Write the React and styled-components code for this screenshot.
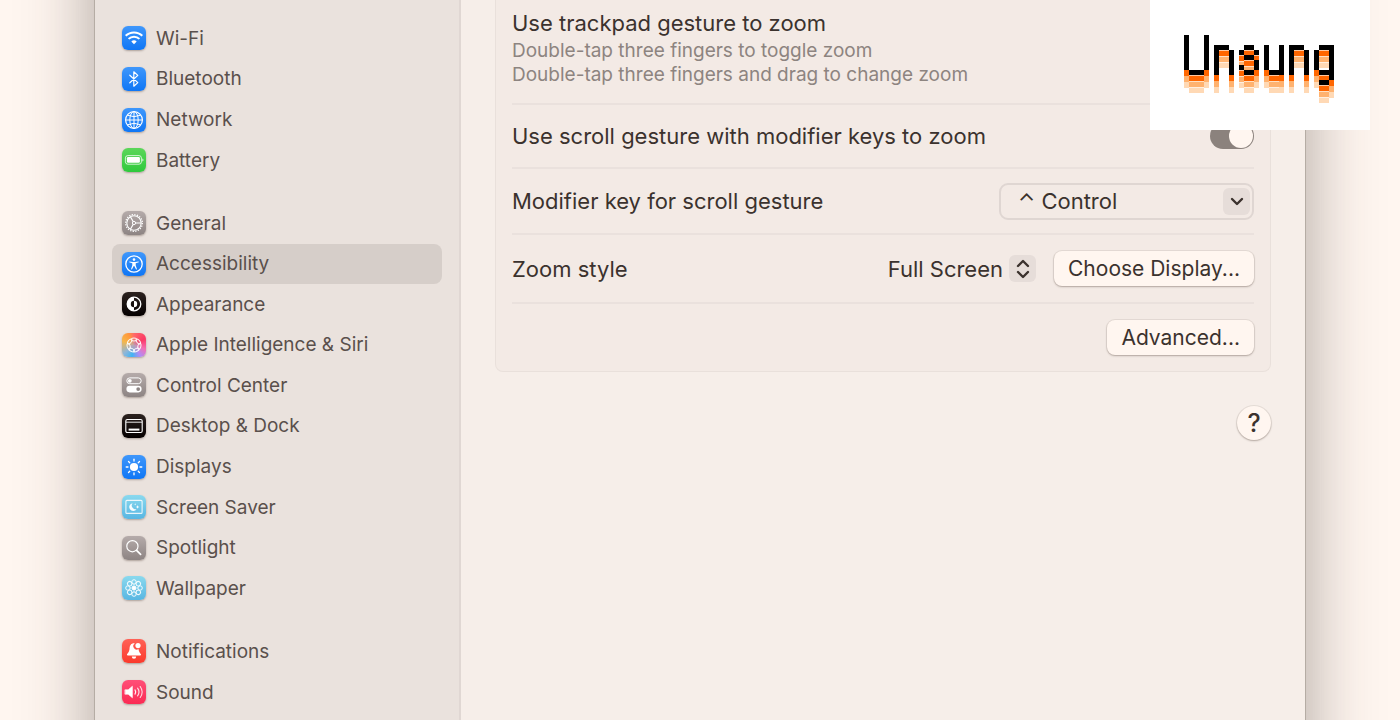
import React, { useState } from 'react'
import styled, { createGlobalStyle } from 'styled-components'

const GlobalStyle = createGlobalStyle`
  * {
    box-sizing: border-box;
  }
  body {
    margin: 0;
    background: #fff6f0;
    font-family: Inter, 'Liberation Sans', sans-serif;
    color: #3b322e;
  }
`

const blue = ['#3f97fb', '#0f76f5']
const gray = ['#b5abaa', '#8d8483']
const black = ['#2c221f', '#050000']
const sky = ['#8ad9ee', '#58b6e2']

const range = n => Array.from({ length: n }, (v, i) => i)

const glyphs = {
  wifi: (
    <g fill="none" stroke="#fff" strokeWidth="2">
      <path d="M3.7 9.8a11.8 11.8 0 0 1 16.6 0" />
      <path d="M6.6 12.9a7.6 7.6 0 0 1 10.8 0" />
      <path d="M12 18.2l-2.7-2.7a3.9 3.9 0 0 1 5.4 0z" fill="#fff" stroke="none" />
    </g>
  ),
  bluetooth: (
    <path
      d="M7.8 8.2l8 7.4-4 3.6V4.8l4 3.6-8 7.4"
      fill="none"
      stroke="#fff"
      strokeWidth="1.2"
      strokeLinejoin="round"
      strokeLinecap="round"
    />
  ),
  network: (
    <g fill="none" stroke="#fff" strokeWidth="1">
      <circle cx="12" cy="12" r="8.4" strokeWidth="1.2" />
      <ellipse cx="12" cy="12" rx="4.2" ry="8.4" />
      <path d="M12 3.6v16.8M3.6 12h16.8M5.4 7.2q6.6 3 13.2 0M5.4 16.8q6.6-3 13.2 0" />
    </g>
  ),
  battery: (
    <g>
      <rect x="3.4" y="7.6" width="16" height="8.6" rx="2.4" fill="none" stroke="#fff" strokeOpacity=".75" />
      <rect x="4.9" y="9.1" width="13" height="5.6" rx="1.2" fill="#fff" />
      <path d="M20.3 10.4q1.2.4 1.2 1.5t-1.2 1.5z" fill="#fff" opacity=".8" />
    </g>
  ),
  general: (
    <g fill="none" stroke="#fff">
      <circle cx="12" cy="12" r="7.2" strokeWidth="1.1" />
      <circle cx="12" cy="12" r="8.4" strokeWidth="1.2" strokeDasharray="1.3 1.34" />
      <circle cx="12" cy="12" r="1.6" strokeWidth="1" />
      <path d="M13.6 12h5.6M11.2 10.6L8.4 5.8M11.2 13.4l-2.8 4.8" strokeWidth="1.1" />
    </g>
  ),
  accessibility: (
    <g fill="#fff">
      <circle cx="12" cy="12" r="8.2" fill="none" stroke="#fff" strokeWidth="1.3" />
      <circle cx="12" cy="7.6" r="1.3" />
      <path d="M7.4 9.4l3.2.6h2.8l3.2-.6.2.9-3.1.9v2l1.3 4.1-.9.3-1.8-3.6h-.6l-1.8 3.6-.9-.3 1.3-4.1v-2l-3.1-.9z" />
    </g>
  ),
  appearance: (
    <g>
      <circle cx="12" cy="12" r="6.8" fill="none" stroke="#fff" strokeWidth="1.3" />
      <path d="M12 5.2a6.8 6.8 0 0 0 0 13.6v-3.6a3.2 3.2 0 0 1 0-6.4z" fill="#fff" />
      <path d="M12 8.8a3.2 3.2 0 0 1 0 6.4z" fill="#fff" />
    </g>
  ),
  siri: (
    <g fill="none" stroke="#fff" strokeWidth="1" strokeOpacity=".9">
      {range(7).map(i => (
        <ellipse key={i} cx="12" cy="6.5" rx="3" ry="1.5" transform={`rotate(${(i * 360) / 7} 12 12)`} />
      ))}
    </g>
  ),
  control: (
    <g stroke="#fff">
      <rect x="4.8" y="4.9" width="14.4" height="5.8" rx="2.9" fill="none" strokeWidth="1" />
      <circle cx="7.8" cy="7.8" r="1.9" fill="#fff" stroke="none" />
      <rect x="4.4" y="12.8" width="15.2" height="6.6" rx="3.3" fill="#fff" stroke="none" />
      <circle cx="16.2" cy="16.1" r="1.9" fill="#8d8483" stroke="none" />
    </g>
  ),
  dock: (
    <g fill="none" stroke="#fff">
      <rect x="3.8" y="5.5" width="16.4" height="13" rx="1.5" strokeWidth="1.1" />
      <path d="M4 8.2h16" strokeWidth=".9" />
      <path d="M6.6 15.6h10.8" strokeWidth="2" />
    </g>
  ),
  displays: (
    <g>
      <circle cx="12" cy="12" r="4.1" fill="#fff" />
      {range(8).map(i => (
        <path
          key={i}
          d="M12 4.2v1.8"
          stroke="#fff"
          strokeWidth="1.3"
          strokeLinecap="round"
          transform={`rotate(${i * 45} 12 12)`}
        />
      ))}
    </g>
  ),
  saver: (
    <g>
      <rect x="3.9" y="5.4" width="16.2" height="13" rx="1" fill="none" stroke="#fff" strokeOpacity=".85" strokeWidth="1.1" />
      <path d="M10.6 8.2a3.9 3.9 0 1 0 4 5.7 3.6 3.6 0 0 1-4-5.7z" fill="#fff" opacity=".95" />
      <path d="M15.6 10l.5 1.4 1.4.5-1.4.5-.5 1.4-.5-1.4-1.4-.5 1.4-.5zM13.2 8.2l.3.8.8.3-.8.3-.3.8-.3-.8-.8-.3.8-.3z" fill="#fff" />
    </g>
  ),
  spotlight: (
    <g fill="none" stroke="#fff" strokeLinecap="round">
      <circle cx="10.4" cy="10.2" r="5.6" strokeWidth="1.2" />
      <path d="M14.6 14.4l4 4" strokeWidth="1.7" />
    </g>
  ),
  wallpaper: (
    <g fill="none" stroke="#fff" strokeWidth="1" strokeOpacity=".9">
      {range(8).map(i => (
        <g key={i} transform={`rotate(${i * 45} 12 12)`}>
          <circle cx="12" cy="5.9" r="2.2" />
          <path d="M12 8.2v2.4" strokeWidth=".8" />
        </g>
      ))}
      <circle cx="12" cy="12" r="1.6" fill="#fff" />
    </g>
  ),
  notifications: (
    <g fill="#fff">
      <path d="M12 4.2c-3 0-4.2 2.2-4.4 4.8-.2 3.2-.9 4.4-2.4 6-.5.6-.2 1.4.6 1.4h12.4c.8 0 1.1-.8.6-1.4-1.3-1.4-2-2.5-2.3-4.9a3.4 3.4 0 0 1-3.7-5.7z" />
      <path d="M9.8 17.6h4.4a2.2 2.2 0 0 1-4.4 0z" />
      <circle cx="16" cy="6.6" r="2.6" />
    </g>
  ),
  sound: (
    <g fill="none" stroke="#fff" strokeLinecap="round">
      <path d="M3.2 9.8h3L10.4 6.2v11.6L6.2 14.2h-3z" fill="#fff" strokeWidth=".6" strokeLinejoin="round" />
      <path d="M13 9.9a3.6 3.6 0 0 1 0 4.2" strokeWidth="1.1" />
      <path d="M15.6 8.2a6.4 6.4 0 0 1 0 7.6" strokeWidth="1.1" strokeOpacity=".85" />
      <path d="M18.2 6.5a9.4 9.4 0 0 1 0 11" strokeWidth="1.1" strokeOpacity=".8" />
    </g>
  )
}

const groups = [
  {
    height: 163,
    items: [
      { name: 'Wi-Fi', glyph: 'wifi', colors: blue },
      { name: 'Bluetooth', glyph: 'bluetooth', colors: blue },
      { name: 'Network', glyph: 'network', colors: blue },
      { name: 'Battery', glyph: 'battery', colors: ['#5cd65a', '#2fc93c'] }
    ]
  },
  {
    height: 406,
    items: [
      { name: 'General', glyph: 'general', colors: gray },
      { name: 'Accessibility', glyph: 'accessibility', colors: blue },
      { name: 'Appearance', glyph: 'appearance', colors: black },
      { name: 'Apple Intelligence & Siri', glyph: 'siri', colors: null },
      { name: 'Control Center', glyph: 'control', colors: gray },
      { name: 'Desktop & Dock', glyph: 'dock', colors: black },
      { name: 'Displays', glyph: 'displays', colors: blue },
      { name: 'Screen Saver', glyph: 'saver', colors: sky },
      { name: 'Spotlight', glyph: 'spotlight', colors: gray },
      { name: 'Wallpaper', glyph: 'wallpaper', colors: sky }
    ]
  },
  {
    height: 82,
    items: [
      { name: 'Notifications', glyph: 'notifications', colors: ['#ff6257', '#fb3a2c'] },
      { name: 'Sound', glyph: 'sound', colors: ['#ff4f78', '#fb2a53'] }
    ]
  }
]

const logoRows = [
  '#...#.........................',
  '#...#.........................',
  '#...#.###...##..#..#.###...###',
  '#...#.#..#.#..#.#..#.#..#.#..#',
  '#...#.#..#..##..#..#.#..#.#..#',
  '#...#.#..#....#.#..#.#..#.#..#',
  '#...#.#..#.#..#.#..#.#..#.#..#',
  '.###..#..#..##...###.#..#..###',
  '.............................#',
  '...........................##.'
]

const logoCells = logoRows.flatMap((row, y) =>
  [...row].flatMap((cell, x) => (cell === '#' ? [{ x: x * 5, y: y * 5 }] : []))
)

// seam is the paler line on top of each dropped copy
const logoLayers = [
  { color: '#ffd9b5', seam: '#ffefe0', drop: 18 },
  { color: '#ffb26f', seam: '#ffdfc2', drop: 12 },
  { color: '#ff6600', seam: '#ffc8a0', drop: 6 },
  { color: '#000000', seam: null, drop: 0 }
]

const App = () => {
  const [current, setCurrent] = useState('Accessibility')
  return (
    <Page>
      <GlobalStyle />
      <Window>
        <Sidebar aria-label="Settings">
          {groups.map((group, i) => (
            <Group key={i} $height={group.height}>
              {group.items.map(item => (
                <li key={item.name}>
                  <Item
                    href="#"
                    $active={item.name === current}
                    onClick={e => {
                      e.preventDefault()
                      setCurrent(item.name)
                    }}
                  >
                    <Tile $colors={item.colors}>
                      <svg width="24" height="24" viewBox="0 0 24 24" aria-hidden="true">
                        {glyphs[item.glyph]}
                      </svg>
                    </Tile>
                    {item.name}
                  </Item>
                </li>
              ))}
            </Group>
          ))}
        </Sidebar>
        <ZoomSettings />
      </Window>
      <LogoCard href="#">
        <Logo />
      </LogoCard>
    </Page>
  )
}

const ZoomSettings = () => (
  <Content>
    <Card>
      <Row $height={105}>
        <Intro>
          <Label>Use trackpad gesture to zoom</Label>
          <Hint>Double-tap three fingers to toggle zoom</Hint>
          <Hint>Double-tap three fingers and drag to change zoom</Hint>
        </Intro>
      </Row>
      <Row $height={64}>
        <Label as="label" htmlFor="scroll">
          Use scroll gesture with modifier keys to zoom
        </Label>
        <Toggle id="scroll" type="checkbox" defaultChecked />
      </Row>
      <Row $height={66}>
        <Label as="label" htmlFor="modifier">
          Modifier key for scroll gesture
        </Label>
        <SelectBox>
          <BoxSelect id="modifier" defaultValue="control">
            <option value="control">⌃ Control</option>
            <option value="option">⌥ Option</option>
            <option value="command">⌘ Command</option>
          </BoxSelect>
          <Knob $inset={4}>
            <svg width="14" height="14" viewBox="0 0 14 14" aria-hidden="true">
              <path d="M2 5l5 5 5-5" />
            </svg>
          </Knob>
        </SelectBox>
      </Row>
      <Row $height={69}>
        <Label as="label" htmlFor="style">
          Zoom style
        </Label>
        <Controls>
          <SelectBox>
            <PlainSelect id="style" defaultValue="full">
              <option value="full">Full Screen</option>
              <option value="split">Split Screen</option>
              <option value="pip">Picture-in-Picture</option>
            </PlainSelect>
            <Knob $inset={0}>
              <svg width="14" height="20" viewBox="0 0 14 20" aria-hidden="true">
                <path d="M2 7l5-5 5 5M2 13l5 5 5-5" />
              </svg>
            </Knob>
          </SelectBox>
          <Button>Choose Display...</Button>
        </Controls>
      </Row>
      <Row $height={67} $end>
        <Button>Advanced...</Button>
      </Row>
    </Card>
    <Help aria-label="Help">?</Help>
  </Content>
)

const Logo = () => (
  <svg width="150" height="68" viewBox="0 0 150 68" role="img" aria-label="Unsung" shapeRendering="crispEdges">
    {logoLayers.map(({ color, seam, drop }) => (
      <g key={color}>
        {seam &&
          logoCells.map(({ x, y }) => (
            <rect key={`${x}-${y}`} x={x} y={y + drop - 1} width="5" height="1" fill={seam} />
          ))}
        {logoCells.map(({ x, y }) => (
          <rect key={`${x}-${y}`} x={x} y={y + drop} width="5" height="5" fill={color} />
        ))}
      </g>
    ))}
  </svg>
)

const Page = styled.div`
  position: relative;
  height: 100vh;
  overflow: hidden;
  padding: 0 95px;
`

// runs past the top and bottom edge so that only the side shadows show
const Window = styled.main`
  display: flex;
  min-height: calc(100vh + 160px);
  margin: -80px 0;
  padding: 80px 0;
  background: linear-gradient(to right, #eae2dd 364px, #e0d7d3 364px, #e0d7d3 366px, #f6eee9 366px);
  box-shadow: 0 0 0 1px rgba(60, 45, 35, 0.2), 0 0 68px rgba(50, 42, 36, 0.42);
`

const Sidebar = styled.nav`
  flex: 0 0 366px;
  display: flex;
  flex-direction: column;
  gap: 22px;
  padding: 18px 19px 0 17px;
`

const Group = styled.ul`
  display: grid;
  grid-auto-rows: 1fr;
  height: ${p => p.$height}px;
  margin: 0;
  padding: 0;
  list-style: none;
`

const Item = styled.a`
  display: flex;
  align-items: center;
  gap: 10px;
  height: 40px;
  padding: 0 10px;
  border-radius: 8px;
  background: ${p => (p.$active ? '#d6cec9' : 'transparent')};
  color: #5a504c;
  font-size: 19px;
  text-decoration: none;
`

const Tile = styled.span`
  display: flex;
  width: 24px;
  height: 24px;
  border-radius: 6px;
  background: ${p =>
    p.$colors
      ? `linear-gradient(${p.$colors[0]}, ${p.$colors[1]})`
      : `radial-gradient(circle at 50% 55%, #b7a3b8 0, transparent 45%),
        conic-gradient(from 0deg, #ff6a6a, #fb3a66 60deg, #f46fb4 110deg, #b08cf5 150deg, #3fb4f5 190deg, #8fb6d8 230deg, #f5b64a 290deg, #ff9a3c 330deg, #ff6a6a)`};
  box-shadow: 0 1px 2px rgba(60, 40, 30, 0.35);
`

const Content = styled.section`
  flex: 1;
  display: flex;
  flex-direction: column;
  align-items: flex-end;
  padding: 0 34px;
`

const Card = styled.div`
  align-self: stretch;
  padding: 0 16px;
  background: #f3eae5;
  border: 1px solid #e9e0db;
  border-top: 0;
  border-radius: 0 0 8px 8px;
`

const Row = styled.div`
  display: flex;
  align-items: center;
  justify-content: ${p => (p.$end ? 'flex-end' : 'space-between')};
  height: ${p => p.$height}px;
  border-bottom: 2px solid #eae1dd;

  &:last-child {
    border-bottom: 0;
  }
`

const Intro = styled.div`
  padding-bottom: 10px;
`

const Label = styled.div`
  font-size: 22px;
  line-height: 32px;
`

const Hint = styled.div`
  color: #8d8480;
  font-size: 19px;
  line-height: 24px;
`

const Controls = styled.div`
  display: flex;
  align-items: center;
  gap: 18px;
`

const Toggle = styled.input`
  appearance: none;
  display: flex;
  justify-content: flex-end;
  width: 44px;
  height: 26px;
  margin: 0;
  padding: 1px;
  border-radius: 13px;
  background: #8b827d;

  &::before {
    content: '';
    width: 24px;
    height: 24px;
    border-radius: 50%;
    background: #fff6f0;
  }

  &:not(:checked) {
    justify-content: flex-start;
    background: #d6cec9;
  }
`

const SelectBox = styled.div`
  display: grid;
  align-items: center;

  > * {
    grid-area: 1 / 1;
  }
`

const Select = styled.select`
  appearance: none;
  margin: 0;
  background: transparent;
  color: inherit;
  font-family: inherit;
  font-size: 22px;
`

const BoxSelect = styled(Select)`
  width: 255px;
  height: 37px;
  padding: 0 36px 0 17px;
  border: 2px solid #dfd6d2;
  border-radius: 9px;
`

const PlainSelect = styled(Select)`
  field-sizing: content;
  height: 28px;
  padding: 0 33px 0 0;
  border: 0;
`

const Knob = styled.span`
  display: flex;
  align-items: center;
  justify-content: center;
  justify-self: end;
  width: 27px;
  height: 27px;
  margin-right: ${p => p.$inset}px;
  border-radius: 6px;
  background: #e6ddd9;
  pointer-events: none;

  path {
    fill: none;
    stroke: #3b322e;
    stroke-width: 2.4;
    stroke-linecap: round;
    stroke-linejoin: round;
  }
`

const Button = styled.button`
  height: 35px;
  padding: 0 14px;
  border: 0;
  border-radius: 8px;
  background: #fff6f0;
  box-shadow: 0 0 0 1px rgba(60, 40, 30, 0.07), 0 1px 2px rgba(60, 40, 30, 0.3);
  color: inherit;
  font-family: inherit;
  font-size: 21px;
`

const Help = styled(Button)`
  width: 34px;
  height: 34px;
  margin-top: 34px;
  padding: 0;
  border-radius: 50%;
  font-size: 25px;
  font-weight: 500;
`

const LogoCard = styled.a`
  position: absolute;
  top: 0;
  right: 30px;
  display: flex;
  padding: 35px 36px 27px 34px;
  background: #fff;
`

export default App
